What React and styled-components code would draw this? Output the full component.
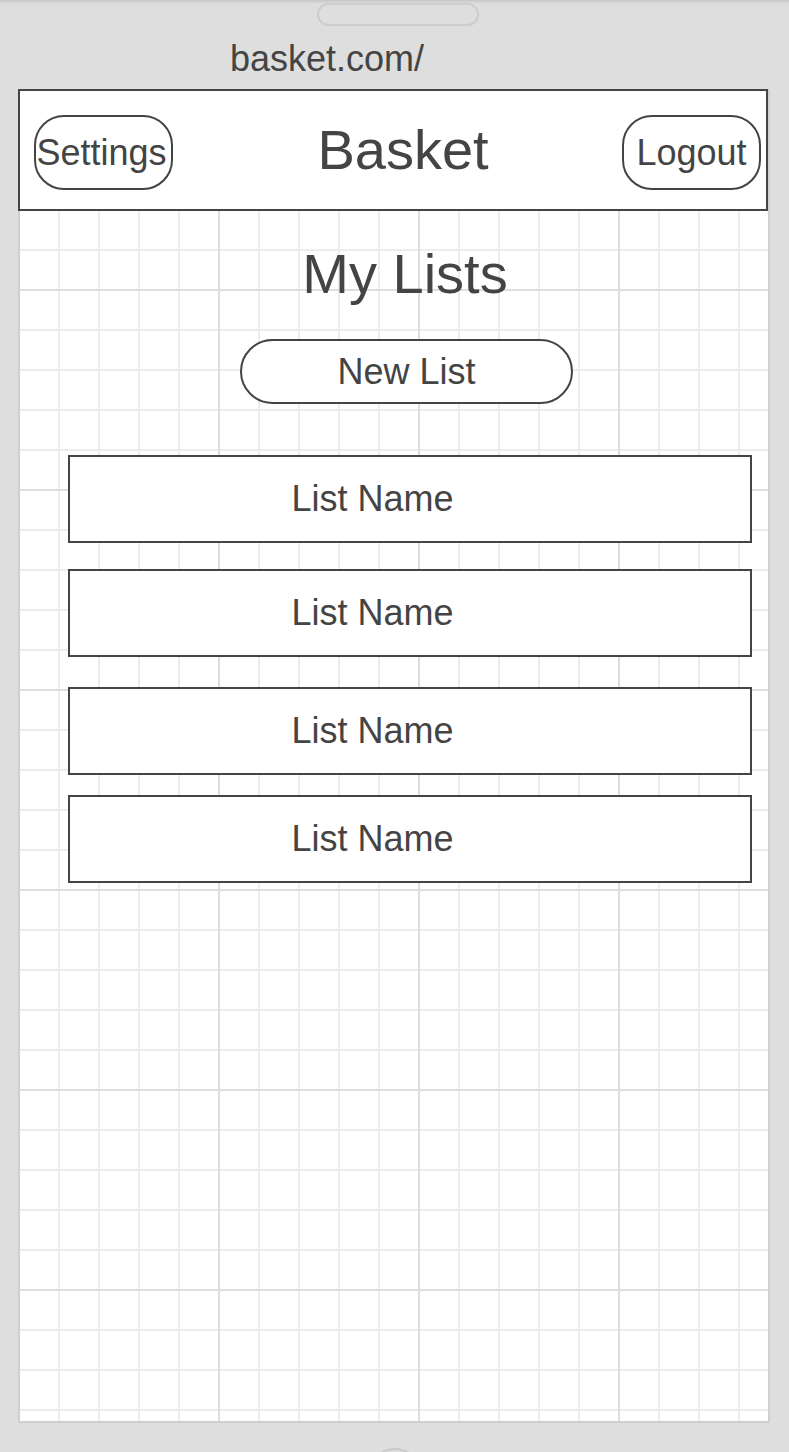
import React from "react";
import styled, { createGlobalStyle } from "styled-components";

const GlobalStyle = createGlobalStyle`
  html, body {
    margin: 0;
    padding: 0;
    background: #dedede;
  }
  body {
    font-family: "Liberation Sans", Arial, sans-serif;
    color: #444;
  }
  * {
    box-sizing: border-box;
  }
`;

const Device = styled.div`
  width: 789px;
  height: 1452px;
  overflow: hidden;
  display: flex;
  flex-direction: column;
  background: linear-gradient(#c6c6c6 0, #dedede 4px) #dedede;

  & > * {
    flex-shrink: 0;
  }
`;

const Speaker = styled.div`
  width: 162px;
  height: 23px;
  margin: 3px 0 0 317px;
  border: 2px solid #cdcdcd;
  border-radius: 12px;
`;

const Url = styled.div`
  margin: 15px 0 0 230px;
  font-size: 36px;
  line-height: 1;
  color: #444;
`;

const Screen = styled.div`
  width: 752px;
  height: 1334px;
  margin: 12px 0 0 18px;
  background-color: #fff;
  background-origin: border-box;
  background-image:
    linear-gradient(to right, #dedede 2px, transparent 2px),
    linear-gradient(to bottom, #dedede 2px, transparent 2px),
    linear-gradient(to right, #ededed 2px, transparent 2px),
    linear-gradient(to bottom, #ededed 2px, transparent 2px);
  background-size: 200px 200px, 200px 200px, 40px 40px, 40px 40px;
  box-shadow: inset 2px 0 #cfcfcf, inset -2px 0 #cfcfcf, inset 0 -2px #cfcfcf;
`;

const Header = styled.header`
  width: 750px;
  height: 122px;
  border: 2px solid #444;
  background: #fff;
  display: grid;
  grid-template-columns: 139px 1fr 139px;
  align-items: center;
  padding: 0 5px 0 14px;
`;

const PillButton = styled.button`
  height: 75px;
  margin-top: 5px;
  padding: 0 ${(p) => (p.$tight ? "4px" : "0")} 0 0;
  border: 2px solid #444;
  border-radius: 30px;
  background: transparent;
  font-family: inherit;
  font-size: 36px;
  color: #444;
  display: flex;
  align-items: center;
  justify-content: center;
  white-space: nowrap;
  overflow: visible;
`;

const AppTitle = styled.h1`
  margin: 0;
  padding-left: 11px;
  font-size: 56px;
  font-weight: normal;
  text-align: center;
  line-height: 1;
`;

const Content = styled.main`
  display: flex;
  flex-direction: column;
  align-items: center;
  padding-left: 22px;
`;

const PageTitle = styled.h2`
  margin: 35px 0 0;
  font-size: 56px;
  font-weight: normal;
  line-height: 1;
`;

const NewListButton = styled.button`
  width: 333px;
  height: 65px;
  margin: 37px 0 0 3px;
  border: 2px solid #444;
  border-radius: 33px;
  background: #fff;
  font-family: inherit;
  font-size: 36px;
  color: #444;
`;

const ListStack = styled.div`
  align-self: stretch;
  display: flex;
  flex-direction: column;
  margin: 51px 18px 0 28px;
`;

const ListItem = styled.div`
  height: 88px;
  margin-top: ${(p) => p.$space}px;
  border: 2px solid #444;
  background: #fff;
  display: flex;
  align-items: center;
  justify-content: center;
  padding-right: 75px;
  font-size: 36px;
`;

const HomeButton = styled.div`
  width: 52px;
  height: 52px;
  margin: 25px 0 0 369px;
  border: 2px solid #c9c9c9;
  border-radius: 50%;
`;

const lists = [
  { id: 1, name: "List Name", space: 0 },
  { id: 2, name: "List Name", space: 26 },
  { id: 3, name: "List Name", space: 30 },
  { id: 4, name: "List Name", space: 20 },
];

const App = () => {
  return (
    <>
      <GlobalStyle />
      <Device>
        <Speaker />
        <Url>basket.com/</Url>
        <Screen>
          <Header>
            <PillButton $tight>Settings</PillButton>
            <AppTitle>Basket</AppTitle>
            <PillButton>Logout</PillButton>
          </Header>
          <Content>
            <PageTitle>My Lists</PageTitle>
            <NewListButton>New List</NewListButton>
            <ListStack>
              {lists.map((list) => (
                <ListItem key={list.id} $space={list.space}>
                  {list.name}
                </ListItem>
              ))}
            </ListStack>
          </Content>
        </Screen>
        <HomeButton />
      </Device>
    </>
  );
};

export default App;
